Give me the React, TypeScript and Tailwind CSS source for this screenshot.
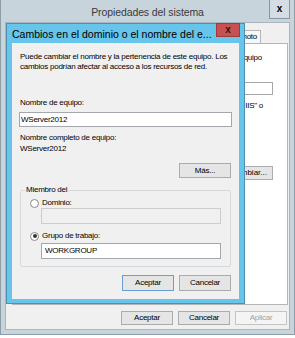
import React from "react";

function WinButton({
  label,
  width = "w-[52px]",
  height = "h-[16px]",
  variant = "normal",
}: {
  label: string;
  width?: string;
  height?: string;
  variant?: "normal" | "default" | "disabled";
}) {
  const tone =
    variant === "default"
      ? "border-[#6b9fd3] bg-[#e5e5e5] text-black"
      : variant === "disabled"
        ? "border-[#c4c4c4] bg-[#f4f4f4] text-[#a3a3a3]"
        : "border-[#acacac] bg-[#e5e5e5] text-black";
  return (
    <button
      type="button"
      className={`flex shrink-0 items-center justify-center border leading-[10px] ${width} ${height} ${tone}`}
    >
      {label}
    </button>
  );
}

function Radio({ checked }: { checked?: boolean }) {
  return (
    <span className="flex h-[9px] w-[9px] shrink-0 items-center justify-center rounded-full border border-[#8a8a8a] bg-white">
      {checked && <span className="h-[4px] w-[4px] rounded-full bg-[#333]" />}
    </span>
  );
}

// window behind: most of it is covered by the dialog, only the right strip shows
function SystemProperties() {
  return (
    <div className="flex h-[335px] w-[295px] flex-col border-x border-b border-[#8e9ca6] bg-[#c8d4dc] px-[4px] pb-[4px]">
      <div className="flex h-[22px] items-start">
        <div className="w-[21px] shrink-0" />
        <div className="mt-[6px] flex-1 text-center text-[10.5px] leading-[13px] tracking-[-0.1px] text-[#3a3a3a]">
          Propiedades del sistema
        </div>
        <div className="flex h-[19px] w-[21px] shrink-0 items-center justify-center border-x border-b border-[#8796a1] bg-[#d3dde3] text-[10px] font-bold leading-none text-black">
          x
        </div>
      </div>

      <div className="flex flex-1 flex-col border border-[#a9b6bf] bg-[#f0f0f0] pt-[7px] pb-[4px]">
        <div className="flex h-[13px] items-end justify-end pr-[28px]">
          <div className="h-[13px] border border-b-0 border-[#b5b5b5] bg-[#f7f7f7] px-[3px] leading-[12px]">
            Remoto
          </div>
        </div>

        <div className="ml-[6px] mr-[1px] flex h-[262px] flex-col border border-[#b5b5b5] bg-white">
          <div className="mt-[9px] flex justify-end whitespace-nowrap pr-[25px] leading-[10px]">
            equipo
          </div>
          <div className="h-[10px]" />
          <div className="mt-[9px] flex justify-end pr-[14px]">
            <div className="h-[13px] w-[150px] border border-[#a5a7ad] bg-white" />
          </div>
          <div className="mt-[6px] flex justify-end whitespace-nowrap pr-[24px] leading-[10px]">
            IIS" o
          </div>
          <div className="mt-[55px] flex justify-end pr-[14px]">
            <button
              type="button"
              className="flex h-[14px] w-[52px] items-center justify-end whitespace-nowrap border border-[#acacac] bg-[#e5e5e5] pr-[5px] leading-[10px] tracking-normal"
            >
              Cambiar...
            </button>
          </div>
        </div>

        <div className="mt-[6px] flex justify-end gap-[5px] pr-[2px]">
          <WinButton label="Aceptar" height="h-[14px]" />
          <WinButton label="Cancelar" height="h-[14px]" />
          <WinButton label="Aplicar" height="h-[14px]" variant="disabled" />
        </div>
      </div>
    </div>
  );
}

function ChangeNameDialog() {
  return (
    <div className="absolute left-[6px] top-[23px] flex h-[281px] w-[239px] flex-col border border-[#4f8fb0] bg-[#67c4ea] px-[5px] pb-[4px]">
      <div className="flex h-[19px] items-start">
        <div className="mt-[4px] flex-1 overflow-hidden whitespace-nowrap text-[10.5px] leading-[13px] tracking-normal text-black">
          Cambios en el dominio o el nombre del e...
        </div>
        <div className="-mr-[1px] -mt-[1px] flex h-[14px] w-[24px] shrink-0 items-center justify-center border border-[#9e3c3c] bg-[#c75050] text-[10px] font-bold leading-none text-[#1c1c1c]">
          x
        </div>
      </div>

      <div className="flex flex-1 flex-col bg-[#f0f0f0] px-[7px]">
        <div className="mt-[9px] pl-[1px] leading-[10px]">
          Puede cambiar el nombre y la pertenencia de este equipo. Los
          <br />
          cambios podrían afectar al acceso a los recursos de red.
        </div>

        <div className="mt-[26px] pl-[1px] leading-[10px]">Nombre de equipo:</div>
        <div className="mt-[4px] flex h-[15px] items-center border border-[#a5a7ad] bg-white pl-[1px] leading-[10px]">
          WServer2012
        </div>

        <div className="mt-[6px] pl-[1px] leading-[10px]">Nombre completo de equipo:</div>
        <div className="mt-[1px] pl-[1px] leading-[10px]">WServer2012</div>

        <div className="mt-[9px] flex justify-end pr-[1px]">
          <WinButton label="Más..." height="h-[15px]" />
        </div>

        <fieldset className="mx-[1px] mt-[7px] rounded-[2px] border border-[#d5dadd] pb-[7px]">
          <legend className="ml-[4px] px-[1px] leading-[10px]">Miembro del</legend>
          <div className="mt-[3px] flex h-[10px] items-center gap-[3px] pl-[9px] leading-[10px]">
            <Radio />
            <span>Dominio:</span>
          </div>
          <div className="ml-[20px] mr-[9px] h-[16px] border border-[#cdcdcd] bg-[#f0f0f0]" />
          <div className="mt-[7px] flex h-[10px] items-center gap-[3px] pl-[9px] leading-[10px]">
            <Radio checked />
            <span>Grupo de trabajo:</span>
          </div>
          <div className="ml-[20px] mr-[9px] mt-[2px] flex h-[16px] items-center border border-[#a5a7ad] bg-white pl-[3px] leading-[10px]">
            WORKGROUP
          </div>
        </fieldset>

        <div className="mt-[8px] flex justify-end gap-[5px] pr-[1px]">
          <WinButton label="Aceptar" variant="default" />
          <WinButton label="Cancelar" />
        </div>
      </div>
    </div>
  );
}

export default function App() {
  return (
    <div className="relative h-[338px] w-[295px] overflow-hidden bg-white font-['Liberation_Sans',Arial,sans-serif] text-[8px] tracking-[-0.25px] text-black">
      <SystemProperties />
      <ChangeNameDialog />
    </div>
  );
}
